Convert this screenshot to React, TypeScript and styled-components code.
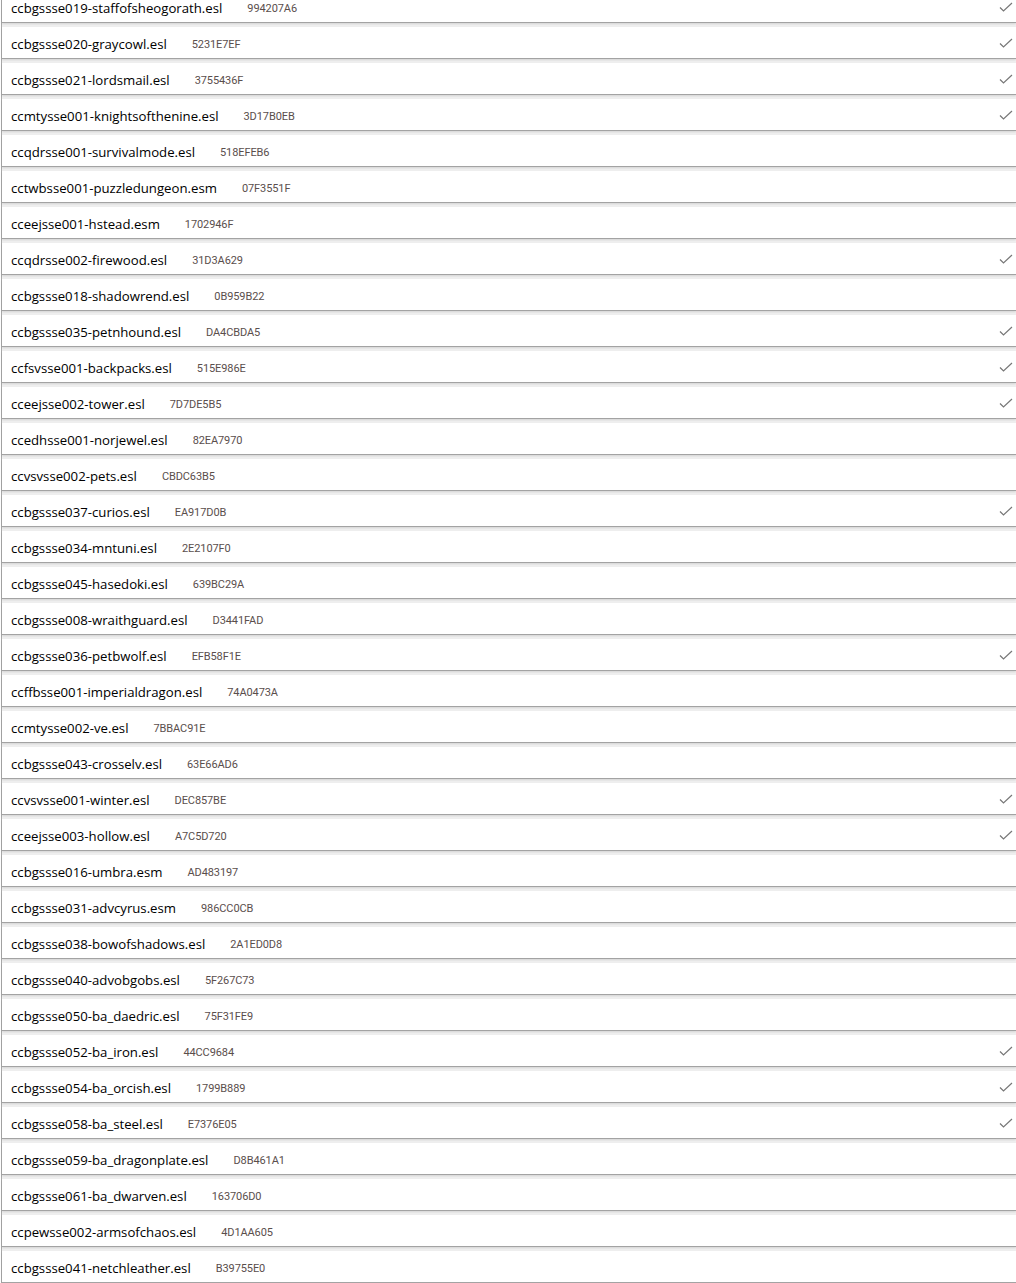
import React from "react";
import styled, { createGlobalStyle } from "styled-components";

type Plugin = { file: string; crc: string; loaded?: boolean };

const plugins: Plugin[] = [
  { file: "ccbgssse019-staffofsheogorath.esl", crc: "994207A6", loaded: true },
  { file: "ccbgssse020-graycowl.esl", crc: "5231E7EF", loaded: true },
  { file: "ccbgssse021-lordsmail.esl", crc: "3755436F", loaded: true },
  { file: "ccmtysse001-knightsofthenine.esl", crc: "3D17B0EB", loaded: true },
  { file: "ccqdrsse001-survivalmode.esl", crc: "518EFEB6" },
  { file: "cctwbsse001-puzzledungeon.esm", crc: "07F3551F" },
  { file: "cceejsse001-hstead.esm", crc: "1702946F" },
  { file: "ccqdrsse002-firewood.esl", crc: "31D3A629", loaded: true },
  { file: "ccbgssse018-shadowrend.esl", crc: "0B959B22" },
  { file: "ccbgssse035-petnhound.esl", crc: "DA4CBDA5", loaded: true },
  { file: "ccfsvsse001-backpacks.esl", crc: "515E986E", loaded: true },
  { file: "cceejsse002-tower.esl", crc: "7D7DE5B5", loaded: true },
  { file: "ccedhsse001-norjewel.esl", crc: "82EA7970" },
  { file: "ccvsvsse002-pets.esl", crc: "CBDC63B5" },
  { file: "ccbgssse037-curios.esl", crc: "EA917D0B", loaded: true },
  { file: "ccbgssse034-mntuni.esl", crc: "2E2107F0" },
  { file: "ccbgssse045-hasedoki.esl", crc: "639BC29A" },
  { file: "ccbgssse008-wraithguard.esl", crc: "D3441FAD" },
  { file: "ccbgssse036-petbwolf.esl", crc: "EFB58F1E", loaded: true },
  { file: "ccffbsse001-imperialdragon.esl", crc: "74A0473A" },
  { file: "ccmtysse002-ve.esl", crc: "7BBAC91E" },
  { file: "ccbgssse043-crosselv.esl", crc: "63E66AD6" },
  { file: "ccvsvsse001-winter.esl", crc: "DEC857BE", loaded: true },
  { file: "cceejsse003-hollow.esl", crc: "A7C5D720", loaded: true },
  { file: "ccbgssse016-umbra.esm", crc: "AD483197" },
  { file: "ccbgssse031-advcyrus.esm", crc: "986CC0CB" },
  { file: "ccbgssse038-bowofshadows.esl", crc: "2A1ED0D8" },
  { file: "ccbgssse040-advobgobs.esl", crc: "5F267C73" },
  { file: "ccbgssse050-ba_daedric.esl", crc: "75F31FE9" },
  { file: "ccbgssse052-ba_iron.esl", crc: "44CC9684", loaded: true },
  { file: "ccbgssse054-ba_orcish.esl", crc: "1799B889", loaded: true },
  { file: "ccbgssse058-ba_steel.esl", crc: "E7376E05", loaded: true },
  { file: "ccbgssse059-ba_dragonplate.esl", crc: "D8B461A1" },
  { file: "ccbgssse061-ba_dwarven.esl", crc: "163706D0" },
  { file: "ccpewsse002-armsofchaos.esl", crc: "4D1AA605" },
  { file: "ccbgssse041-netchleather.esl", crc: "B39755E0" },
];

const GlobalStyle = createGlobalStyle`
  html, body {
    margin: 0;
    padding: 0;
    background: #ffffff;
    overflow: hidden;
  }
  body {
    font-family: "Open Sans", "Noto Sans", "Liberation Sans", sans-serif;
  }
`;

// the list is scrolled a little, so the first entry sits under the top edge
const Viewport = styled.div`
  height: 1283px;
  overflow: hidden;
  padding-left: 1px;
`;

const List = styled.div`
  display: flex;
  flex-direction: column;
  gap: 4px;
  margin-top: -10px;
  background: #f0f0f0;
  border-left: 1px solid #a8a8a8;
`;

const Row = styled.div`
  display: flex;
  align-items: center;
  box-sizing: border-box;
  height: 32px;
  padding: 3px 3px 0 9px;
  background: #ffffff;
  border-bottom: 1px solid #a3a3a3;
  box-shadow: 0 1px 2px rgba(0, 0, 0, 0.12);

  &:first-child {
    height: 33px;
  }
`;

const FileName = styled.span`
  font-size: 13.2px;
  color: #000000;
  white-space: nowrap;
`;

const Crc = styled.span`
  margin-left: 25px;
  padding-top: 1px;
  font-family: Roboto, "Liberation Sans", sans-serif;
  font-size: 11px;
  color: #5a4e4c;
  letter-spacing: -0.1px;
`;

const Spacer = styled.div`
  flex: 1;
`;

const Check = styled.svg`
  width: 14px;
  height: 10px;
  margin-top: -2px;
`;

const CheckMark = () => (
  <Check viewBox="0 0 14 10">
    <polyline
      points="1,5.5 4.5,9 13,1"
      fill="none"
      stroke="#777777"
      strokeWidth="1.2"
    />
  </Check>
);

export default function App() {
  return (
    <>
      <GlobalStyle />
      <Viewport>
        <List>
          {plugins.map((p) => (
            <Row key={p.file}>
              <FileName>{p.file}</FileName>
              <Crc>{p.crc}</Crc>
              <Spacer />
              {p.loaded && <CheckMark />}
            </Row>
          ))}
        </List>
      </Viewport>
    </>
  );
}
